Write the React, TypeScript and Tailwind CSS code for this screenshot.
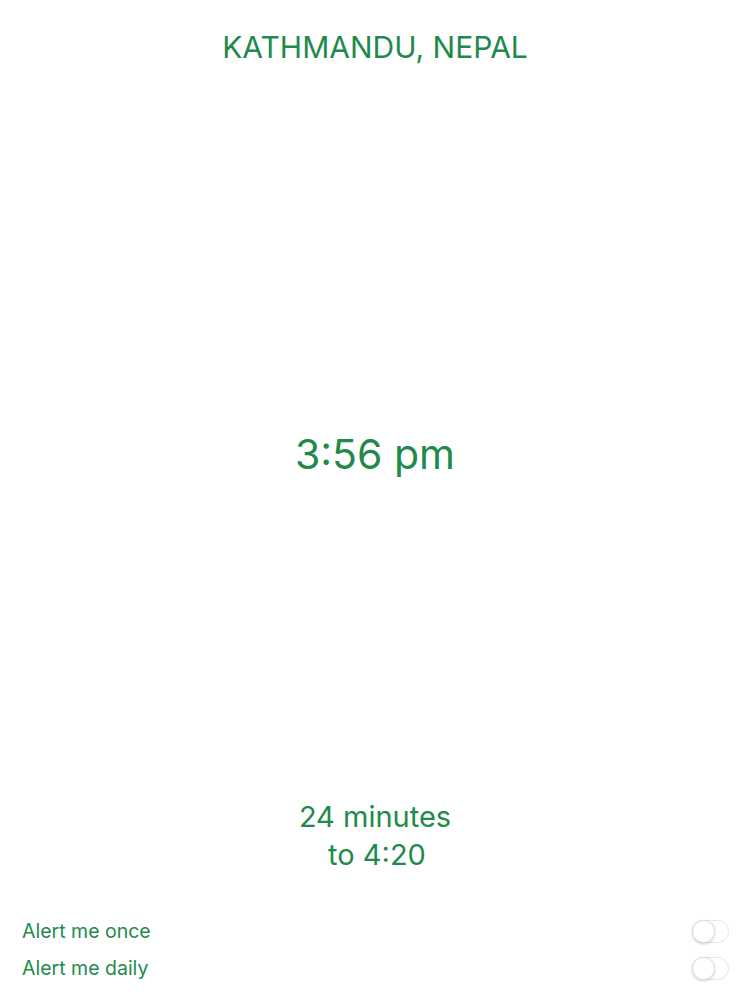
import { useState } from 'react'

function Toggle({ on, onChange }: { on: boolean; onChange: (v: boolean) => void }) {
  return (
    <button
      type="button"
      onClick={() => onChange(!on)}
      className={`relative h-[23px] w-[37px] rounded-full border border-[#e4e4e4] ${on ? 'bg-[#1f8a4c]' : 'bg-white'}`}
    >
      <span
        className={`absolute top-[-1px] h-[23px] w-[23px] rounded-full border border-[#e0e0e0] bg-white shadow-[0_1px_3px_rgba(0,0,0,0.18)] ${on ? 'left-[13px]' : 'left-[-1px]'}`}
      />
    </button>
  )
}

export default function App() {
  const [once, setOnce] = useState(false)
  const [daily, setDaily] = useState(false)

  return (
    <div
      className="flex h-[1000px] w-[750px] flex-col items-center bg-white text-[#1f8a4c]"
      style={{ fontFamily: 'Inter, "Noto Sans", sans-serif' }}
    >
      <h1 className="mt-[29px] text-[30px] leading-[36px] font-normal">KATHMANDU, NEPAL</h1>

      <div className="mt-[364px] text-[41px] leading-[50px]">3:56 pm</div>

      <div className="mt-[319px] text-center text-[29px] leading-[38px]">
        <div>24 minutes</div>
        <div className="pl-[4px]">to 4:20</div>
      </div>

      <div className="mt-[39px] flex w-full flex-col pr-[21px] pl-[22px]">
        <div className="flex h-[37px] items-center justify-between">
          <span className="text-[19.5px]">Alert me once</span>
          <Toggle on={once} onChange={setOnce} />
        </div>
        <div className="flex h-[37px] items-center justify-between">
          <span className="text-[19.5px]">Alert me daily</span>
          <Toggle on={daily} onChange={setDaily} />
        </div>
      </div>
    </div>
  )
}
